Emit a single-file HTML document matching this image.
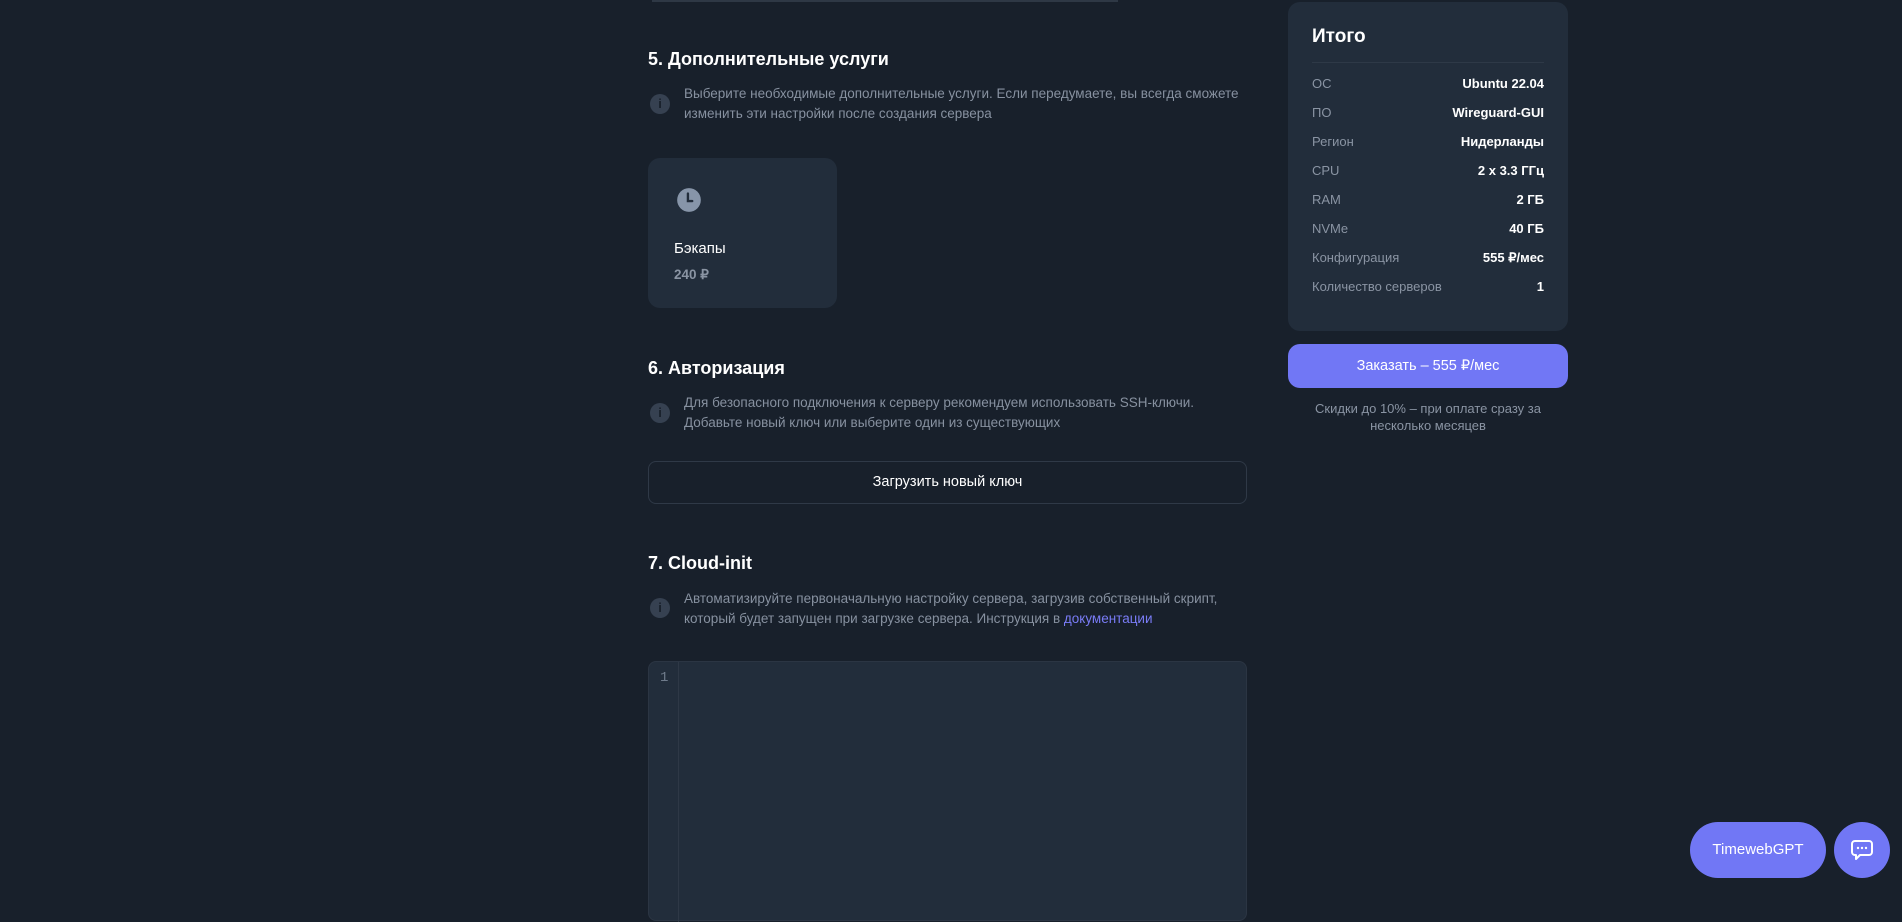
<!DOCTYPE html>
<html><head><meta charset="utf-8"><style>
*{margin:0;padding:0;box-sizing:border-box}
body{width:1902px;height:908px;background:#18202b;font-family:"Liberation Sans","Noto Sans CJK SC",sans-serif;position:relative;overflow:hidden;color:#fff}
.a{position:absolute}
h2{position:absolute;font-size:18px;font-weight:bold;color:#fff;left:648px}
.info{position:absolute;left:650px;width:20px;height:20px;border-radius:50%;background:#364151}
.info:after{content:"i";position:absolute;left:0;right:0;top:2px;text-align:center;color:#18202b;font-weight:bold;font-size:13px}
.t{position:absolute;left:684px;font-size:13.5px;line-height:20px;color:#8791a0}
.row{position:absolute;left:1312px;width:232px;font-size:13px;display:flex;justify-content:space-between}
.row span:first-child{color:#8a94a3}
.row span:last-child{color:#fff;font-weight:bold}
</style></head><body>
<div class="a" style="left:652px;top:0;width:466px;height:2px;background:#2e3845"></div>

<h2 style="top:49px">5. Дополнительные услуги</h2>
<div class="info" style="top:94px"></div>
<div class="t" style="top:84px">Выберите необходимые дополнительные услуги. Если передумаете, вы всегда сможете<br>изменить эти настройки после создания сервера</div>
<div class="a" style="left:648px;top:158px;width:189px;height:150px;background:#222d3b;border-radius:12px">
 <svg class="a" style="left:27px;top:28px" width="28" height="28" viewBox="0 0 26 26"><circle cx="13" cy="13" r="11" fill="#8795a9"/><path d="M12 7v7h4" stroke="#222d3b" stroke-width="2.2" fill="none" stroke-linecap="round"/></svg>
 <div class="a" style="left:26px;top:82px;font-size:15px">Бэкапы</div>
 <div class="a" style="left:26px;top:109px;font-size:13.5px;color:#8a94a3;font-weight:bold">240 ₽</div>
</div>

<h2 style="top:358px">6. Авторизация</h2>
<div class="info" style="top:403px"></div>
<div class="t" style="top:393px">Для безопасного подключения к серверу рекомендуем использовать SSH-ключи.<br>Добавьте новый ключ или выберите один из существующих</div>
<div class="a" style="left:648px;top:461px;width:599px;height:43px;border:1px solid #2f3947;border-radius:8px;text-align:center;line-height:41px;font-size:14.5px">Загрузить новый ключ</div>

<h2 style="top:553px">7. Cloud-init</h2>
<div class="info" style="top:598px"></div>
<div class="t" style="top:589px">Автоматизируйте первоначальную настройку сервера, загрузив собственный скрипт,<br>который будет запущен при загрузке сервера. Инструкция в <span style="color:#7a7cf7">документации</span></div>
<div class="a" style="left:648px;top:661px;width:599px;height:260px;background:#222d3b;border:1px solid #2b3543;border-radius:8px">
 <div class="a" style="left:29px;top:0;width:1px;height:260px;background:#2e3846"></div>
 <div class="a" style="left:11px;top:8px;font-family:'Liberation Mono',monospace;font-size:14px;color:#6f7b8b">1</div>
</div>

<div class="a" style="left:1288px;top:2px;width:280px;height:329px;background:#222d3b;border-radius:12px"></div>
<div class="a" style="left:1312px;top:26px;font-size:19px;font-weight:bold">Итого</div>
<div class="a" style="left:1312px;top:62px;width:232px;height:1px;background:#2e3947"></div>
<div class="row" style="top:76px"><span>ОС</span><span>Ubuntu 22.04</span></div>
<div class="row" style="top:105px"><span>ПО</span><span>Wireguard-GUI</span></div>
<div class="row" style="top:134px"><span>Регион</span><span>Нидерланды</span></div>
<div class="row" style="top:163px"><span>CPU</span><span>2 x 3.3 ГГц</span></div>
<div class="row" style="top:192px"><span>RAM</span><span>2 ГБ</span></div>
<div class="row" style="top:221px"><span>NVMe</span><span>40 ГБ</span></div>
<div class="row" style="top:250px"><span>Конфигурация</span><span>555 ₽/мес</span></div>
<div class="row" style="top:279px"><span>Количество серверов</span><span>1</span></div>
<div class="a" style="left:1288px;top:344px;width:280px;height:44px;background:#7177f5;border-radius:12px;text-align:center;line-height:44px;font-size:14.5px">Заказать – 555 ₽/мес</div>
<div class="a" style="left:1288px;top:400px;width:280px;text-align:center;font-size:13px;line-height:17px;color:#8a94a3">Скидки до 10% – при оплате сразу за<br>несколько месяцев</div>

<div class="a" style="left:1690px;top:822px;width:136px;height:56px;border-radius:28px;background:#7177f5;text-align:center;line-height:56px;font-size:15px">TimewebGPT</div>
<div class="a" style="left:1834px;top:822px;width:56px;height:56px;border-radius:50%;background:#7177f5">
 <svg class="a" style="left:16px;top:16px" width="24" height="24" viewBox="0 0 24 24"><path d="M5 3h14a3 3 0 0 1 3 3v8a3 3 0 0 1-3 3h-9l-4 4v-4H5a3 3 0 0 1-3-3V6a3 3 0 0 1 3-3z" fill="none" stroke="#fff" stroke-width="2" stroke-linejoin="round"/><circle cx="8" cy="10" r="1.2" fill="#fff"/><circle cx="12" cy="10" r="1.2" fill="#fff"/><circle cx="16" cy="10" r="1.2" fill="#fff"/></svg>
</div>
</body></html>
